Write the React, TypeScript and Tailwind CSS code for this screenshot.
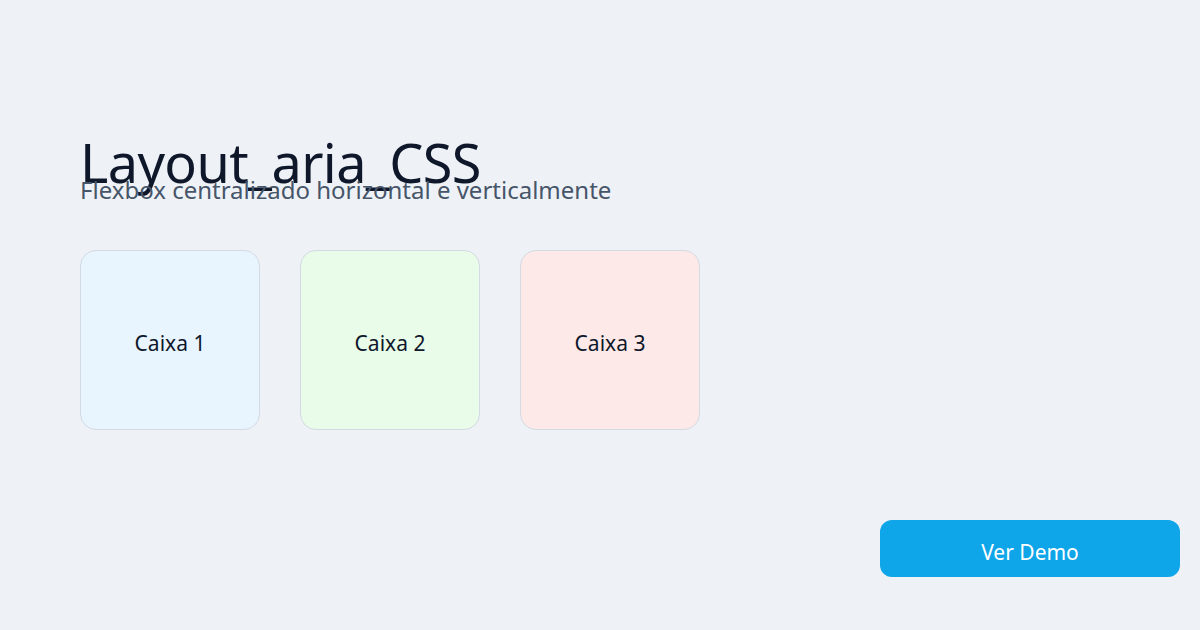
export default function App() {
  const boxes = [
    { label: "Caixa 1", bg: "bg-[#e8f4fe]" },
    { label: "Caixa 2", bg: "bg-[#e9fce9]" },
    { label: "Caixa 3", bg: "bg-[#fde9e8]" },
  ];

  return (
    <div className="h-[630px] w-[1200px] overflow-hidden bg-[#eef2f7] font-['Noto_Sans',sans-serif] text-[#0f172a]">
      <div className="pl-20 pt-[130px]">
        <h1 className="h-[56px] text-[54px] leading-[64px] font-normal tracking-[-0.6px]">
          Layout_aria_CSS
        </h1>
        <p className="mt-[-12px] text-[24px] leading-[32px] text-[#475569]">
          Flexbox centralizado horizontal e verticalmente
        </p>

        <div className="mt-[44px] flex gap-10">
          {boxes.map((b) => (
            <div
              key={b.label}
              className={`flex h-[180px] w-[180px] items-center justify-center rounded-2xl border border-[#d3dae3] pt-2 ${b.bg} text-[21px]`}
            >
              {b.label}
            </div>
          ))}
        </div>

        <div className="mt-[90px] flex justify-end pr-5">
          <button
            type="button"
            className="flex h-[57px] w-[300px] items-center justify-center rounded-xl bg-[#0ea5e9] pt-2 text-[21px] text-white"
          >
            Ver Demo
          </button>
        </div>
      </div>
    </div>
  );
}
